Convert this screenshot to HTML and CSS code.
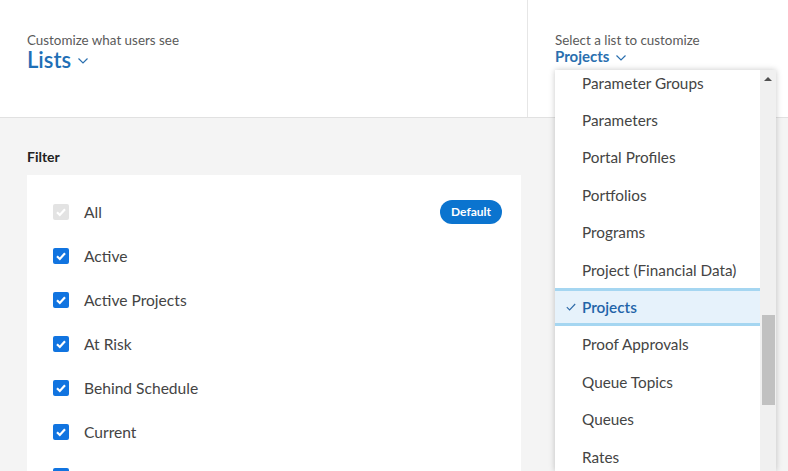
FILE: index.html
```html
<!DOCTYPE html>
<html>
<head>
<meta charset="utf-8">
<link rel="stylesheet" href="styles.css">
</head>
<body>
<header class="header">
  <div class="header-left">
    <div class="eyebrow">Customize what users see</div>
    <div class="lists-title">Lists
      <svg class="chev chev-lg" viewBox="0 0 10 6" width="10" height="6"><path d="M0.5 0.5 L5 5 L9.5 0.5" fill="none" stroke="currentColor" stroke-width="1.2"/></svg>
    </div>
  </div>
  <div class="header-right">
    <div class="eyebrow">Select a list to customize</div>
    <div class="list-select">Projects
      <svg class="chev" viewBox="0 0 10 6" width="10" height="6"><path d="M0.5 0.5 L5 5 L9.5 0.5" fill="none" stroke="currentColor" stroke-width="1.2"/></svg>
    </div>
  </div>
</header>
<main class="main">
  <h2 class="filter-title">Filter</h2>
  <div class="card">
    <div class="row">
      <span class="cb cb-disabled"><svg viewBox="0 0 16 16" width="16" height="16"><path d="M4 8.3 L6.8 11 L12 5.2" fill="none" stroke="#fff" stroke-width="2.2"/></svg></span>
      <span class="label">All</span>
      <span class="badge">Default</span>
    </div>
    <div class="row">
      <span class="cb"><svg viewBox="0 0 16 16" width="16" height="16"><path d="M4 8.3 L6.8 11 L12 5.2" fill="none" stroke="#fff" stroke-width="2.2"/></svg></span>
      <span class="label">Active</span>
    </div>
    <div class="row">
      <span class="cb"><svg viewBox="0 0 16 16" width="16" height="16"><path d="M4 8.3 L6.8 11 L12 5.2" fill="none" stroke="#fff" stroke-width="2.2"/></svg></span>
      <span class="label">Active Projects</span>
    </div>
    <div class="row">
      <span class="cb"><svg viewBox="0 0 16 16" width="16" height="16"><path d="M4 8.3 L6.8 11 L12 5.2" fill="none" stroke="#fff" stroke-width="2.2"/></svg></span>
      <span class="label">At Risk</span>
    </div>
    <div class="row">
      <span class="cb"><svg viewBox="0 0 16 16" width="16" height="16"><path d="M4 8.3 L6.8 11 L12 5.2" fill="none" stroke="#fff" stroke-width="2.2"/></svg></span>
      <span class="label">Behind Schedule</span>
    </div>
    <div class="row">
      <span class="cb"><svg viewBox="0 0 16 16" width="16" height="16"><path d="M4 8.3 L6.8 11 L12 5.2" fill="none" stroke="#fff" stroke-width="2.2"/></svg></span>
      <span class="label">Current</span>
    </div>
    <div class="row">
      <span class="cb"><svg viewBox="0 0 16 16" width="16" height="16"><path d="M4 8.3 L6.8 11 L12 5.2" fill="none" stroke="#fff" stroke-width="2.2"/></svg></span>
    </div>
  </div>
</main>

<div class="dropdown">
  <ul class="options">
    <li class="option">Parameter Groups</li>
    <li class="option">Parameters</li>
    <li class="option">Portal Profiles</li>
    <li class="option">Portfolios</li>
    <li class="option">Programs</li>
    <li class="option">Project (Financial Data)</li>
    <li class="option selected"><svg class="tick" viewBox="0 0 10 8" width="10" height="8"><path d="M0.8 4.2 L3.6 7 L9.2 1" fill="none" stroke="currentColor" stroke-width="1.1"/></svg>Projects</li>
    <li class="option">Proof Approvals</li>
    <li class="option">Queue Topics</li>
    <li class="option">Queues</li>
    <li class="option">Rates</li>
  </ul>
  <div class="scrollbar">
    <span class="arrow-up"></span>
    <span class="thumb"></span>
  </div>
</div>
</body>
</html>
```

FILE: styles.css
```css
* { box-sizing: border-box; }
html, body { margin: 0; padding: 0; }
body {
  font-family: "Lato", "Open Sans", sans-serif;
  background: #f4f4f4;
  color: #444;
  width: 788px;
  height: 471px;
  overflow: hidden;
  position: relative;
  display: flex;
  flex-direction: column;
}
.header {
  display: flex;
  flex: none;
  height: 118px;
  background: #fff;
  border-bottom: 1px solid #e1e1e1;
}
.header-left {
  width: 528px;
  border-right: 1px solid #e6e6e6;
  padding: 33px 0 0 27px;
}
.header-right {
  padding: 33px 0 0 27px;
}
.eyebrow {
  font-size: 13.4px;
  line-height: 15px;
  color: #5a5a5a;
}
.lists-title {
  font-size: 22px;
  line-height: 24px;
  font-weight: 600;
  color: #1f6fb6;
  display: flex;
  align-items: center;
  gap: 7px;
}
.list-select {
  font-size: 15px;
  line-height: 17px;
  font-weight: 700;
  color: #2a6faf;
  display: flex;
  align-items: center;
  gap: 7px;
}
.chev { color: #2a6faf; margin-top: 2px; }
.main {
  flex: 1;
  min-height: 0;
  display: flex;
  flex-direction: column;
  padding: 30px 0 0 27px;
}
.filter-title {
  margin: 0 0 9px 0;
  font-size: 14px;
  line-height: 18px;
  font-weight: 700;
  color: #222;
}
.card {
  flex: 1;
  min-height: 0;
  overflow: hidden;
  width: 494px;
  background: #fff;
  padding: 15px 19px 0 26px;
}
.row {
  display: flex;
  align-items: center;
  height: 44px;
}
.cb {
  width: 16px;
  height: 16px;
  border-radius: 2px;
  background: #1174e0;
  display: flex;
  flex: none;
}
.cb-disabled { background: #e3e3e3; }
.label {
  margin-left: 15px;
  font-size: 15.6px;
  color: #444;
}
.badge {
  margin-left: auto;
  background: #0b74cf;
  color: #fff;
  font-weight: 700;
  font-size: 12px;
  height: 24px;
  line-height: 24px;
  padding: 0 11px;
  border-radius: 12px;
}
.dropdown {
  position: absolute;
  left: 555px;
  top: 70px;
  width: 221px;
  height: 401px;
  background: #fff;
  box-shadow: 0 0 6px rgba(0,0,0,0.22);
  display: flex;
  overflow: hidden;
}
.options {
  list-style: none;
  margin: -6px 0 0 0;
  padding: 0;
  width: 205px;
}
.option {
  height: 37.4px;
  display: flex;
  align-items: center;
  padding-left: 27px;
  font-size: 15.3px;
  color: #444;
  white-space: nowrap;
}
.option.selected {
  background: #e6f2fb;
  border-top: 3px solid #a5d6f1;
  border-bottom: 3px solid #a5d6f1;
  color: #1f64a8;
  font-weight: 600;
  padding-left: 11px;
}
.tick { margin-right: 6px; color: #2d6aa8; }
.scrollbar {
  width: 16px;
  background: #f0f0f0;
  display: flex;
  flex-direction: column;
  align-items: center;
  padding-top: 7px;
}
.arrow-up {
  width: 0;
  height: 0;
  border-left: 4px solid transparent;
  border-right: 4px solid transparent;
  border-bottom: 4px solid #505050;
}
.thumb {
  margin-top: 234px;
  width: 13px;
  height: 90px;
  background: #c1c1c1;
}
```
